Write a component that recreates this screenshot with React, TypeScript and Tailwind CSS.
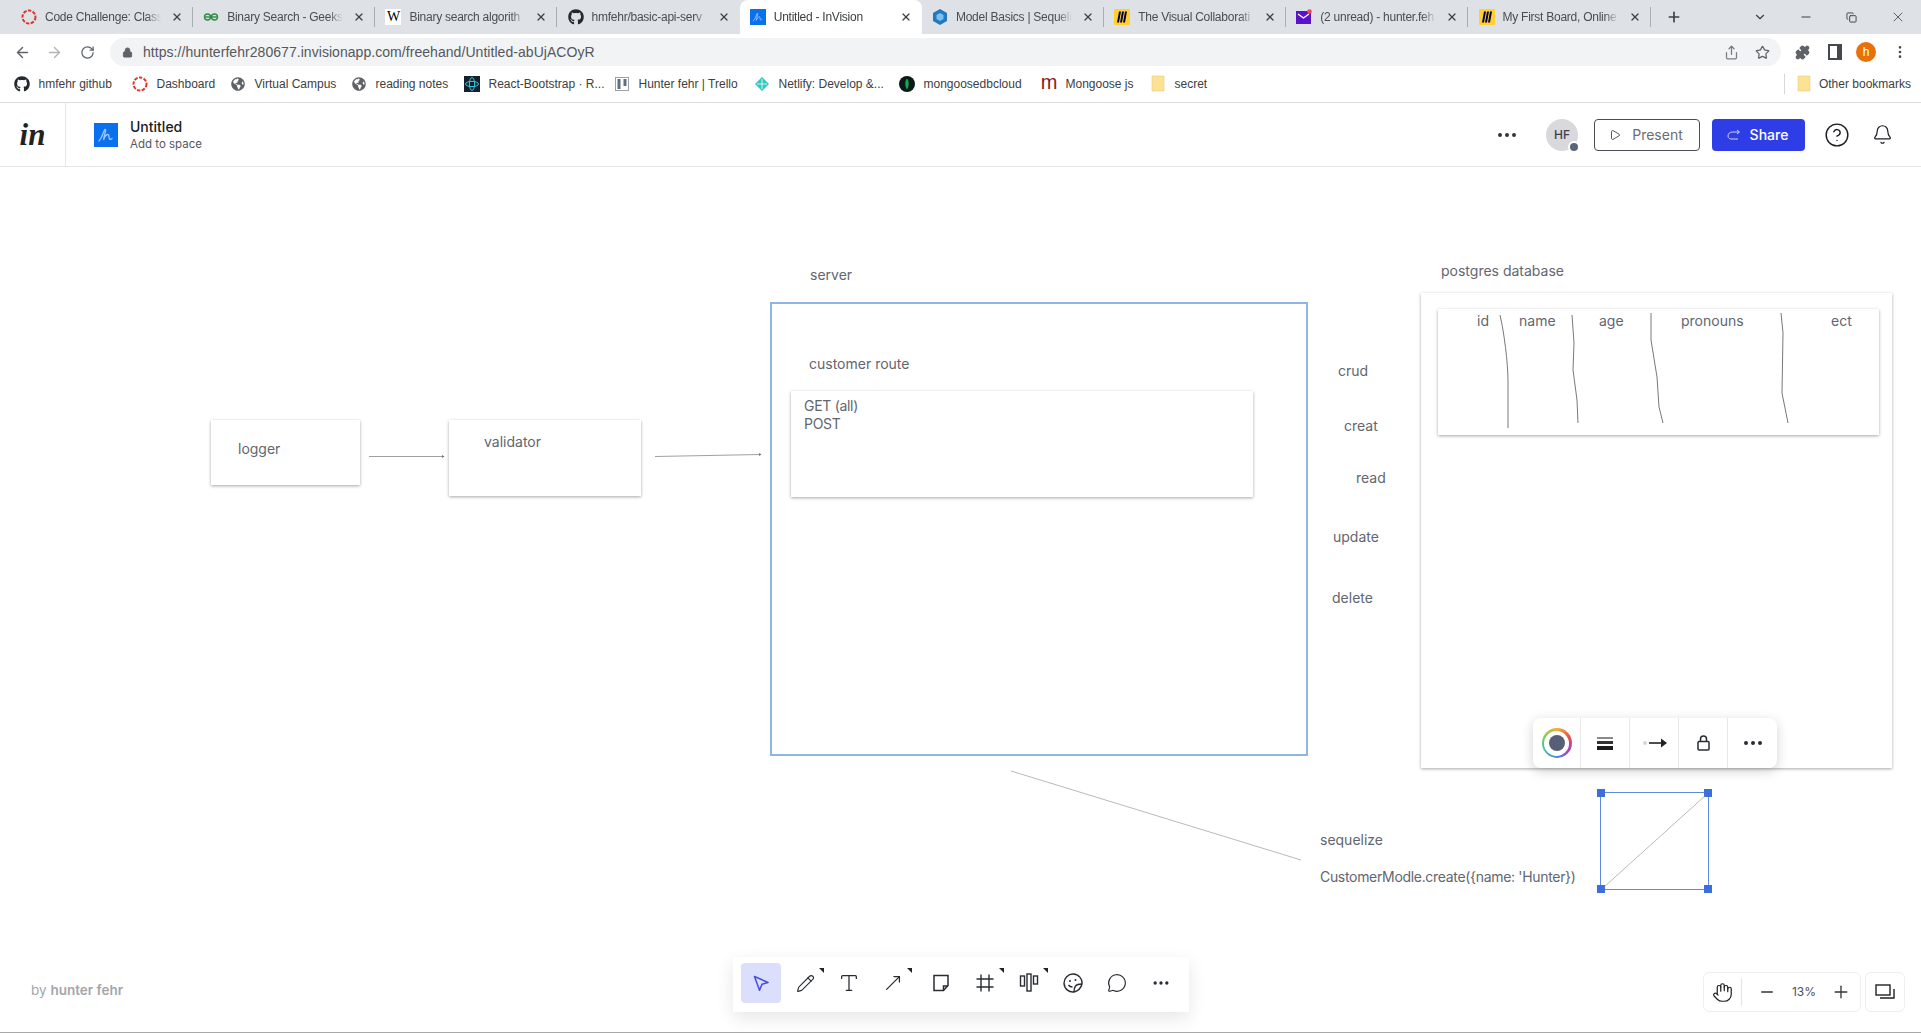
import React from 'react';
import {
  ArrowLeft, ArrowRight, RotateCw, Lock, Star, Puzzle, EllipsisVertical, ChevronDown, Minus, Plus, X, Copy,
  Bell, CircleHelp, Play, Ellipsis, Hand, Type, MessageCircle, Pencil, MoveUpRight, Share,
} from 'lucide-react';
import { FaGithub, FaGlobeAmericas } from 'react-icons/fa';

const chromeFont = "font-['Liberation_Sans',Arial,sans-serif]";

const RedRing = () => (
  <svg width="16" height="16" viewBox="0 0 16 16" fill="none"><circle cx="8" cy="8" r="6.5" stroke="#d8362a" strokeWidth="2" strokeDasharray="3.4 1.4" /></svg>
);
const Gfg = () => (
  <svg width="16" height="16" viewBox="0 0 16 16" fill="none" stroke="#2f8d46" strokeWidth="1.4"><circle cx="4.5" cy="8" r="3" /><circle cx="11.5" cy="8" r="3" /><path d="M1 8h14" /></svg>
);
const Wiki = () => <div className="w-4 h-4 bg-white flex items-center justify-center text-[14px] leading-none text-black font-['Liberation_Serif',serif]">W</div>;
const InvisionFav = ({ size = 16 }: { size?: number }) => (
  <svg width={size} height={size} viewBox="0 0 24 24"><rect width="24" height="24" fill="#0b70ee" /><path d="M5 18c3-3 4-8 5.500-11 1-1.500 1.500 0 .8 2-.7 2.500-1.300 5-1.800 8 1-3 3-5.500 4.500-5.500s.5 3 1.500 4.500c.6.800 1.500.3 2.500-.5" fill="none" stroke="#9cc8ff" strokeWidth="1.300" strokeLinecap="round" /></svg>
);
const SequelizeFav = () => (
  <svg width="16" height="16" viewBox="0 0 16 16"><path d="M8 0l7 4v8l-7 4-7-4V4z" fill="#2379bd" /><path d="M8 4l3.500 2v4L8 12l-3.500-2V6z" fill="#7cc0ee" /></svg>
);
const Miro = () => (
  <svg width="16" height="16" viewBox="0 0 16 16"><rect width="16" height="16" rx="1" fill="#ffd02f" /><path d="M5 2.500h2L5 13.500H3zM8 2.500h2L8 13.500H6zM11 2.500h2l-2 11H9z" fill="#050038" /></svg>
);
const Mail = () => (
  <svg width="16" height="16" viewBox="0 0 16 16"><rect y="2" width="15" height="13" fill="#5a13c9" /><path d="M2 5l5.500 4L13 5" fill="none" stroke="#fff" strokeWidth="1.400" /><circle cx="13.500" cy="2.500" r="2.300" fill="#ef4465" /></svg>
);
const Folder = () => (
  <svg width="16" height="18" viewBox="0 0 16 18"><path d="M2 1h12v15H2z" fill="#fde293" stroke="#e8cf85" strokeWidth="0.600" /></svg>
);

const tabs = [
  { title: 'Code Challenge: Class', icon: <RedRing /> },
  { title: 'Binary Search - Geeksf', icon: <Gfg /> },
  { title: 'Binary search algorith', icon: <Wiki /> },
  { title: 'hmfehr/basic-api-serv', icon: <FaGithub size={16} color="#24292f" /> },
  { title: 'Untitled - InVision', icon: <InvisionFav />, active: true },
  { title: 'Model Basics | Sequeli', icon: <SequelizeFav /> },
  { title: 'The Visual Collaborati', icon: <Miro /> },
  { title: '(2 unread) - hunter.feh', icon: <Mail /> },
  { title: 'My First Board, Online', icon: <Miro /> },
];

const bookmarks = [
  { label: 'hmfehr github', width: 'w-[118px]', icon: <FaGithub size={16} color="#24292f" /> },
  { label: 'Dashboard', width: 'w-[98px]', icon: <RedRing /> },
  { label: 'Virtual Campus', width: 'w-[121px]', icon: <FaGlobeAmericas size={14} color="#5f6368" /> },
  { label: 'reading notes', width: 'w-[113px]', icon: <FaGlobeAmericas size={14} color="#5f6368" /> },
  {
    label: 'React-Bootstrap · R...',
    width: 'w-[150px]',
    icon: (
      <svg width="16" height="16" viewBox="0 0 16 16"><rect width="16" height="16" fill="#16202c" /><ellipse cx="8" cy="8" rx="6.500" ry="2.600" fill="none" stroke="#3bc6e4" /><ellipse cx="8" cy="8" rx="2.600" ry="6.500" fill="none" stroke="#3bc6e4" /></svg>
    ),
  },
  {
    label: 'Hunter fehr | Trello',
    width: 'w-[140px]',
    icon: (
      <svg width="16" height="16" viewBox="0 0 16 16" fill="none"><rect x="1.500" y="1.500" width="13" height="13" stroke="#9aa0a6" /><path d="M5 3v10M11 3v7" stroke="#5f6f80" strokeWidth="3" /></svg>
    ),
  },
  {
    label: 'Netlify: Develop &...',
    width: 'w-[145px]',
    icon: (
      <svg width="16" height="16" viewBox="0 0 16 16"><path d="M8 1l7 7-7 7-7-7z" fill="#30c8c0" /><path d="M3 8h10M8 3v10" stroke="#d5f5f2" /></svg>
    ),
  },
  {
    label: 'mongoosedbcloud',
    width: 'w-[142px]',
    icon: (
      <svg width="16" height="16" viewBox="0 0 16 16"><circle cx="8" cy="8" r="8" fill="#0b1a17" /><path d="M8 2.500c2.300 2.500 2.300 7.500 0 11-2.300-3.500-2.300-8.500 0-11z" fill="#13aa52" /></svg>
    ),
  },
  { label: 'Mongoose js', width: 'w-[109px]', icon: <div className="w-4 h-4 flex items-center justify-center text-[20px] leading-none -mt-1 text-[#8b1a1a]">m</div> },
  { label: 'secret', width: 'w-[80px]', icon: <Folder /> },
];

const Corner = () => <span className="absolute right-[3px] top-[5px] w-0 h-0 border-l-[5px] border-l-transparent border-t-[5px] border-t-[#222]" />;

const BoardIcon = () => (
  <svg width="20" height="20" viewBox="0 0 20 20" fill="none" stroke="#2a2c33" strokeWidth="1.400"><rect x="1.500" y="3" width="4" height="10" /><rect x="8" y="1" width="4" height="17" /><rect x="14.500" y="3" width="4" height="8" /></svg>
);
const StickyIcon = () => (
  <svg width="20" height="20" viewBox="0 0 20 20" fill="none" stroke="#2a2c33" strokeWidth="1.500"><path d="M3 2.500h14v10l-4.500 5H3z" /><path d="M17 13h-4.500v4.500" /></svg>
);
const FrameIcon = () => (
  <svg width="20" height="20" viewBox="0 0 20 20" fill="none" stroke="#2a2c33" strokeWidth="1.400"><path d="M6 1.500v17M14 1.500v17M1.500 6h17M1.500 14h17" /></svg>
);
const SelectIcon = () => (
  <svg width="20" height="20" viewBox="0 0 20 20" fill="none" stroke="#4a50dc" strokeWidth="1.600" strokeLinejoin="round"><path d="M3.500 3.500l13.500 6-6 1.800-2.500 6z" /></svg>
);
const StickerIcon = () => (
  <svg width="20" height="20" viewBox="0 0 20 20" fill="none" stroke="#2a2c33" strokeWidth="1.400"><path d="M11 19a9 9 0 1 1 8-8c-1 4-4 7-8 8z" /><path d="M11 19c0-3 0-4 1.500-6s3.500-2 6.500-2" /><circle cx="7" cy="8" r="1" fill="#2a2c33" stroke="none" /><circle cx="12.500" cy="7" r="1" fill="#2a2c33" stroke="none" /><path d="M5.500 12c1 1.500 2.500 2 4 2" /></svg>
);
const PadlockIcon = () => (
  <svg width="13" height="16" viewBox="0 0 13 16" fill="none" stroke="#2a2c33" strokeWidth="1.500"><rect x="1" y="6.500" width="11" height="8.500" rx="1" /><path d="M3.500 6.500V4a3 3 0 0 1 6 0v2.500" /></svg>
);

const ToolButton = ({ children, selected, corner, className = '' }: { children: React.ReactNode; selected?: boolean; corner?: boolean; className?: string }) => (
  <div className={`relative w-[44px] h-[40px] flex items-center justify-center ${className}`}>
    {selected && <div className="w-[40px] h-[40px] rounded bg-[#dcdffb] flex items-center justify-center">{children}</div>}
    {!selected && children}
    {corner && <Corner />}
  </div>
);

const StrokeSketches = () => (
  <svg className="absolute inset-0 pointer-events-none" width="1921" height="866" fill="none">
    <path d="M369 289.500H444" stroke="#777" strokeWidth="0.700" />
    <path d="M442 288l2.500 1.500-2.500 1.500z" fill="#777" />
    <path d="M655 289.500L761 287.500" stroke="#777" strokeWidth="0.700" />
    <path d="M759 286l2.500 1.500-2.500 1.500z" fill="#777" />
    <path d="M1011 604L1301 693" stroke="#8a8a8a" strokeWidth="0.600" />
    <path d="M1500 148C1504 165 1508 195 1508 215V261" stroke="#555" strokeWidth="0.800" />
    <path d="M1572 148L1574 176 1573 203 1577 233 1578 256" stroke="#555" strokeWidth="0.800" />
    <path d="M1651 146V173L1657 210 1659 240 1663 256" stroke="#555" strokeWidth="0.800" />
    <path d="M1781 146L1783 166 1782 226 1788 256" stroke="#555" strokeWidth="0.800" />
    <path d="M1604 720L1706 628" stroke="#8a8a8a" strokeWidth="0.600" />
  </svg>
);

const CanvasText = ({ className, children }: { className: string; children: React.ReactNode }) => (
  <div className={`absolute text-[14px] leading-5 text-[#62666f] font-['Inter',sans-serif] whitespace-nowrap ${className}`}>{children}</div>
);

const Handle = ({ className }: { className: string }) => <div className={`absolute w-2 h-2 bg-[#3b6fe0] ${className}`} />;

export default function App() {
  return (
    <div className="w-[1921px] h-[1033px] overflow-hidden flex flex-col bg-white border-b border-b-[#a8a8a8]">
      {/* Tab strip */}
      <div className={`h-[34px] shrink-0 bg-[#dee1e6] flex items-center pl-[11px] text-[12px] tracking-[-0.25px] text-[#4a4d52] ${chromeFont}`}>
        {tabs.map((t, i) => (
          <div key={i} className={`w-[182.2px] h-[34px] flex items-center pl-[10px] ${t.active ? 'bg-white rounded-t-lg text-[#3c4043]' : ''}`}>
            <div className="w-4 h-4 shrink-0 flex items-center justify-center">{t.icon}</div>
            <div className="w-[116px] ml-2 shrink-0 overflow-hidden whitespace-nowrap [mask-image:linear-gradient(to_right,black_88%,transparent)]">{t.title}</div>
            <X size={12} strokeWidth={2.5} className="ml-[10px] shrink-0 text-[#3c4043]" />
            {!t.active && i !== 3 && <div className="ml-[9px] w-px h-5 bg-[#a9adb3] shrink-0" />}
          </div>
        ))}
        <Plus size={16} strokeWidth={2.5} className="ml-[15px] text-[#3c4043]" />
        <ChevronDown size={14} className="ml-[71px] text-[#3c4043]" />
        <Minus size={14} className="ml-[32px] text-[#3c4043]" />
        <Copy size={11} className="ml-[33px] text-[#3c4043]" />
        <X size={16} strokeWidth={1.2} className="ml-[33px] text-[#3c4043]" />
      </div>

      {/* Address bar */}
      <div className={`h-[36px] shrink-0 flex items-center ${chromeFont}`}>
        <ArrowLeft size={17} className="ml-[14px] text-[#5f6368]" />
        <ArrowRight size={17} className="ml-[15px] text-[#b1b4b8]" />
        <RotateCw size={15} className="ml-[17px] text-[#5f6368]" />
        <div className="ml-[15px] w-[1671px] h-[28px] rounded-full bg-[#f1f3f4] flex items-center pl-[12px]">
          <Lock size={11} fill="#5f6368" className="text-[#5f6368]" />
          <span className="ml-[10px] text-[14px] text-[#55585d] tracking-[0.05px]">https://hunterfehr280677.invisionapp.com/freehand/Untitled-abUjACOyR</span>
          <Share size={15} className="ml-auto text-[#7a7d82]" />
          <Star size={15} className="ml-[16px] mr-[11px] text-[#5f6368]" />
        </div>
        <Puzzle size={15} fill="#5f6368" className="ml-[14px] text-[#5f6368]" />
        <div className="ml-[18px] w-[14px] h-[16px] border-2 border-r-[5px] border-[#45484d]" />
        <div className="ml-[14px] w-5 h-5 rounded-full bg-[#e8710a] text-white text-[12px] flex items-center justify-center">h</div>
        <EllipsisVertical size={16} className="ml-[16px] text-[#45484d]" />
      </div>

      {/* Bookmarks */}
      <div className={`h-[33px] shrink-0 pb-[5px] border-b border-b-[#dadce0] flex items-center pl-[14px] text-[12px] text-[#3c4043] ${chromeFont}`}>
        {bookmarks.map((b) => (
          <div key={b.label} className={`${b.width} flex items-center gap-[8.5px] whitespace-nowrap`}>
            <div className="w-4 h-4 flex items-center justify-center">{b.icon}</div>
            <span>{b.label}</span>
          </div>
        ))}
        <div className="ml-auto w-px h-5 bg-[#d5d7da]" />
        <div className="ml-[11px] w-4 flex justify-center"><Folder /></div>
        <span className="ml-[7px] mr-[10px]">Other bookmarks</span>
      </div>

      {/* InVision header */}
      <div className="h-[64px] shrink-0 border-b border-b-[#e5e6e8] flex items-center font-['Inter',sans-serif]">
        <div className="w-[66px] h-full border-r border-r-[#e5e6e8] flex items-center justify-center">
          <span className="text-[31px] leading-none font-bold italic text-[#222] font-['Liberation_Serif',serif]">in</span>
        </div>
        <div className="ml-[28px]"><InvisionFav size={24} /></div>
        <div className="ml-3 mt-[2px] flex flex-col">
          <span className="text-[14px] leading-[18px] font-medium text-[#1a1c20]">Untitled</span>
          <span className="text-[11.5px] leading-[17px] text-[#55585f]">Add to space</span>
        </div>
        <div className="ml-auto flex items-center pr-[28px]">
          <Ellipsis size={24} className="text-[#33353a]" />
          <div className="relative ml-[27px] w-8 h-8 rounded-full bg-[#d9d9dd] flex items-center justify-center text-[12px] font-medium text-[#3d4048]">
            HF
            <span className="absolute -right-[2px] -bottom-[2px] w-2 h-2 rounded-full bg-[#5a6478] border-2 border-white box-content" />
          </div>
          <button className="ml-4 w-[106px] h-8 pr-[2px] rounded border border-[#4a4d55] flex items-center justify-center gap-[11px] text-[14px] text-[#6a6d75]">
            <Play size={12} className="text-[#55585f]" />
            Present
          </button>
          <button className="ml-3 w-[93px] h-8 pr-[2px] rounded bg-[#2f3de6] flex items-center justify-center gap-[9px] text-[14px] font-medium text-white">
            <svg width="14" height="12" viewBox="0 0 14 12" fill="none" stroke="#cfd3ff" strokeWidth="1"><path d="M12 3H5.500C3 3 1 4.500 1 7s2 3 4 3h6" /><path d="M10 1l2.500 2L10 5" /></svg>
            Share
          </button>
          <CircleHelp size={26} strokeWidth={1.3} className="ml-[19px] text-[#1c1e22]" />
          <Bell size={21} strokeWidth={1.4} className="ml-[22px] text-[#1c1e22]" />
        </div>
      </div>

      {/* Freehand canvas */}
      <div className="relative flex-1">
        <div className="absolute left-[211px] top-[253px] w-[149px] h-[65px] bg-white shadow-[0_1px_3px_rgba(0,0,0,0.35)]" />
        <CanvasText className="left-[238px] top-[272px]">logger</CanvasText>

        <div className="absolute left-[449px] top-[253px] w-[192px] h-[76px] bg-white shadow-[0_1px_3px_rgba(0,0,0,0.35)]" />
        <CanvasText className="left-[484px] top-[265px]">validator</CanvasText>

        <CanvasText className="left-[810px] top-[98px]">server</CanvasText>
        <div className="absolute left-[770px] top-[135px] w-[538px] h-[454px] border-2 border-[#8fb4e6]" />
        <CanvasText className="left-[809px] top-[187px]">customer route</CanvasText>
        <div className="absolute left-[791px] top-[224px] w-[462px] h-[106px] bg-white shadow-[0_1px_3px_rgba(0,0,0,0.35)]" />
        <CanvasText className="left-[804px] top-[230px] leading-[18px] tracking-[-0.3px]">GET (all)<br />POST</CanvasText>

        <CanvasText className="left-[1338px] top-[194px]">crud</CanvasText>
        <CanvasText className="left-[1344px] top-[249px]">creat</CanvasText>
        <CanvasText className="left-[1356px] top-[301px]">read</CanvasText>
        <CanvasText className="left-[1333px] top-[360px]">update</CanvasText>
        <CanvasText className="left-[1332px] top-[421px]">delete</CanvasText>

        <CanvasText className="left-[1441px] top-[94px]">postgres database</CanvasText>
        <div className="absolute left-[1421px] top-[126px] w-[471px] h-[475px] bg-white shadow-[0_1px_3px_rgba(0,0,0,0.35)]" />
        <div className="absolute left-[1438px] top-[142px] w-[441px] h-[126px] bg-white shadow-[0_1px_3px_rgba(0,0,0,0.35)]" />
        <CanvasText className="left-[1477px] top-[144px]">id</CanvasText>
        <CanvasText className="left-[1519px] top-[144px]">name</CanvasText>
        <CanvasText className="left-[1599px] top-[144px]">age</CanvasText>
        <CanvasText className="left-[1681px] top-[144px]">pronouns</CanvasText>
        <CanvasText className="left-[1831px] top-[144px]">ect</CanvasText>

        <CanvasText className="left-[1320px] top-[663px]">sequelize</CanvasText>
        <CanvasText className="left-[1320px] top-[700px] tracking-[-0.32px]">CustomerModle.create({'{'}name: 'Hunter{'}'})</CanvasText>

        <div className="absolute left-[1600px] top-[625px] w-[109px] h-[98px] border border-[#5f8adf]">
          <Handle className="-left-1 -top-1" />
          <Handle className="-right-1 -top-1" />
          <Handle className="-left-1 -bottom-1" />
          <Handle className="-right-1 -bottom-1" />
        </div>

        <StrokeSketches />

        {/* Selection toolbar */}
        <div className="absolute left-[1533px] top-[551px] w-[244px] h-[50px] rounded-lg bg-white shadow-[0_3px_12px_rgba(0,0,0,0.18)] flex divide-x divide-[#e8e8ea]">
          <div className="w-[48px] flex items-center justify-center">
            <div className="w-[30px] h-[30px] rounded-full bg-[conic-gradient(#f2b13c,#e8553f,#a33fd1,#4f7fe6,#3fc1b0,#7ccf52,#f2b13c)] flex items-center justify-center">
              <div className="w-[25px] h-[25px] rounded-full bg-white flex items-center justify-center">
                <div className="w-4 h-4 rounded-full bg-[#565f75]" />
              </div>
            </div>
          </div>
          <div className="w-[49px] flex items-center justify-center">
            <div className="w-4 flex flex-col gap-[2px]">
              <div className="h-[2px] bg-[#8a8a8a]" />
              <div className="h-[3px] bg-[#333]" />
              <div className="h-[4px] bg-[#1c1c1c]" />
            </div>
          </div>
          <div className="w-[49px] flex items-center justify-center gap-[1px] pl-[3px]">
            <div className="w-1 h-1 rounded-full bg-[#d8d8d8]" />
            <svg width="20" height="12" viewBox="0 0 20 12"><path d="M1 6h14" stroke="#222" strokeWidth="1.600" /><path d="M13 1.500L19 6l-6 4.500z" fill="#222" /></svg>
          </div>
          <div className="w-[49px] flex items-center justify-center"><PadlockIcon /></div>
          <div className="w-[49px] flex items-center justify-center"><Ellipsis size={24} className="text-[#2a2c33]" /></div>
        </div>

        {/* Main toolbar */}
        <div className="absolute left-[733px] top-[790px] w-[456px] h-[55px] bg-white pl-[6px] pb-[3px] shadow-[0_6px_18px_rgba(0,0,0,0.1)] flex items-center">
          <ToolButton selected><SelectIcon /></ToolButton>
          <ToolButton corner><Pencil size={19} strokeWidth={1.4} className="text-[#2a2c33]" /></ToolButton>
          <ToolButton><Type size={22} strokeWidth={1.4} className="text-[#2a2c33]" /></ToolButton>
          <ToolButton corner><MoveUpRight size={22} strokeWidth={1.4} className="text-[#2a2c33]" /></ToolButton>
          <ToolButton className="ml-1"><StickyIcon /></ToolButton>
          <ToolButton corner><FrameIcon /></ToolButton>
          <ToolButton corner><BoardIcon /></ToolButton>
          <ToolButton><StickerIcon /></ToolButton>
          <ToolButton><MessageCircle size={20} strokeWidth={1.4} className="text-[#2a2c33]" /></ToolButton>
          <ToolButton><Ellipsis size={20} className="text-[#2a2c33]" /></ToolButton>
        </div>

        <div className="absolute left-[31px] top-[814px] text-[13.5px] leading-[18px] text-[#a3a6ab] font-['Inter',sans-serif]">
          by <span className="font-semibold">hunter fehr</span>
        </div>

        {/* Zoom controls */}
        <div className="absolute left-[1703px] top-[805px] flex gap-1 font-['Inter',sans-serif]">
          <div className="w-[158px] h-[40px] rounded-md border border-[#eeeef0] bg-white flex items-center">
            <div className="w-[38px] h-[28px] border-r border-r-[#e5e5e7] flex items-center justify-center">
              <Hand size={21} strokeWidth={1.4} className="text-[#222]" />
            </div>
            <Minus size={18} className="ml-[16px] text-[#33353a]" />
            <span className="ml-[13px] w-[30px] text-center text-[12px] text-[#4d4f57]">13%</span>
            <Plus size={20} strokeWidth={1.6} className="ml-[12px] text-[#33353a]" />
          </div>
          <div className="w-[40px] h-[40px] rounded-md border border-[#eeeef0] bg-white flex items-center justify-center">
            <svg width="20" height="18" viewBox="0 0 20 18" fill="none" stroke="#222" strokeWidth="1.400"><rect x="1" y="2" width="14" height="10" /><path d="M5 15h14V6" /></svg>
          </div>
        </div>
      </div>
    </div>
  );
}
